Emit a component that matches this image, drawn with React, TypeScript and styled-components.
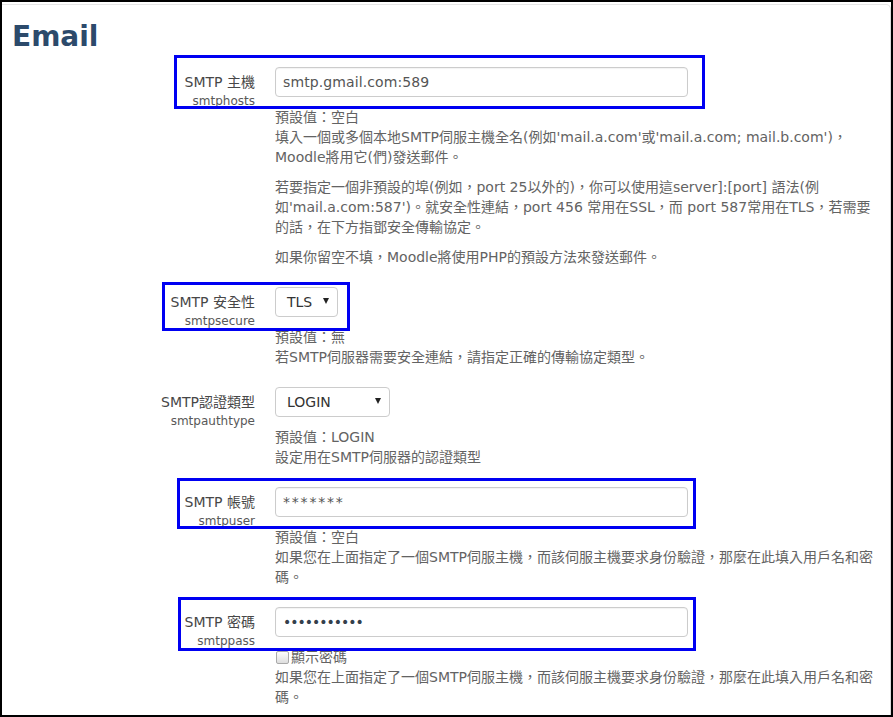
import styled, { createGlobalStyle } from 'styled-components';

const GlobalStyle = createGlobalStyle`
  html, body {
    margin: 0;
    padding: 0;
    background: #fff;
  }
  body {
    font-family: 'DejaVu Sans', 'Noto Sans CJK TC', sans-serif;
    font-size: 14px;
    color: #636363;
  }
`;

const Frame = styled.div`
  box-sizing: border-box;
  width: 893px;
  height: 717px;
  border: 2px solid #000;
  overflow: hidden;
  background: #fff;
`;

const Panel = styled.div`
  margin-top: 2px;
  min-height: 760px;
  border-top: 1px solid #e6e6e6;
  border-right: 1px solid #dcdcdc;
  border-top-right-radius: 5px;
`;

const Title = styled.h2`
  margin: 15px 0 0 10px;
  font-size: 28px;
  line-height: 34px;
  font-weight: bold;
  color: #2c4a6b;
`;

const Form = styled.div`
  margin-top: 13px;
  display: flex;
  flex-direction: column;
  gap: 20px;
`;

const Row = styled.div`
  position: relative;
  display: grid;
  grid-template-columns: 253px 1fr;
  column-gap: 20px;
`;

const LabelCol = styled.div`
  padding-top: 5px;
  text-align: right;
`;

const LabelMain = styled.div`
  font-size: 14px;
  line-height: 20px;
  color: #474747;
  white-space: nowrap;
`;

const LabelSub = styled.div`
  font-size: 12px;
  line-height: 18px;
  color: #585858;
`;

const ItemCol = styled.div`
  display: flex;
  flex-direction: column;
  align-items: flex-start;
`;

const TextInput = styled.input<{ $spacing: number }>`
  box-sizing: border-box;
  width: 413px;
  height: 30px;
  margin: 0;
  padding: 0 7px;
  border: 1px solid #ccc;
  border-radius: 4px;
  box-shadow: inset 0 1px 1px rgba(0, 0, 0, 0.05);
  font-family: 'DejaVu Sans', 'Noto Sans CJK TC', sans-serif;
  font-size: 14px;
  color: ${(p) => (p.type === 'password' ? '#34404c' : '#555')};
  letter-spacing: ${(p) => p.$spacing}px;
  background: #fff;
  outline: none;
`;

const SelectBox = styled.div<{ $width: number }>`
  box-sizing: border-box;
  display: flex;
  align-items: center;
  width: ${(p) => p.$width}px;
  height: 30px;
  padding: 0 8px 0 11px;
  border: 1px solid #ccc;
  border-radius: 4px;
  background: #fff;
  font-size: 14px;
  color: #333;
`;

const Caret = styled.span`
  margin-left: auto;
  margin-top: -3px;
  width: 0;
  height: 0;
  border-left: 3.5px solid transparent;
  border-right: 3.5px solid transparent;
  border-top: 6px solid #222;
`;

const CheckRow = styled.label`
  display: flex;
  align-items: center;
  height: 20px;
  line-height: 20px;
  margin-top: 10px;
`;

const CheckBox = styled.span`
  box-sizing: border-box;
  width: 13px;
  height: 13px;
  margin: 0 2px 0 1px;
  border: 1px solid #a9a9a9;
  border-radius: 2px;
  background: linear-gradient(#fdfdfd, #dedede);
`;

const Desc = styled.div<{ $tight?: boolean }>`
  margin-top: ${(p) => (p.$tight ? 0 : 10)}px;
  line-height: 20px;
  white-space: nowrap;
`;

const Para = styled.p`
  margin: 0 0 10px;
  &:last-child {
    margin-bottom: 0;
  }
`;

const Highlight = styled.div`
  position: absolute;
  box-sizing: border-box;
  border: 3px solid #0000f2;
  pointer-events: none;
`;

type Box = { left: number; top: number; width: number; height: number };

type Control =
  | { kind: 'text'; value: string; spacing: number }
  | { kind: 'password'; value: string; spacing: number }
  | { kind: 'select'; value: string; width: number };

type Setting = {
  label: string;
  name: string;
  control: Control;
  defaultText?: string;
  paragraphs: string[][];
  highlight?: Box;
};

const authHelp = [
  '如果您在上面指定了一個SMTP伺服主機，而該伺服主機要求身份驗證，那麼在此填入用戶名和密',
  '碼。',
];

const settings: Setting[] = [
  {
    label: 'SMTP 主機',
    name: 'smtphosts',
    control: { kind: 'text', value: 'smtp.gmail.com:589', spacing: 0.1 },
    defaultText: '預設值：空白',
    paragraphs: [
      [
        "填入一個或多個本地SMTP伺服主機全名(例如'mail.a.com'或'mail.a.com; mail.b.com')，",
        'Moodle將用它(們)發送郵件。',
      ],
      [
        '若要指定一個非預設的埠(例如，port 25以外的)，你可以使用這server]:[port] 語法(例',
        "如'mail.a.com:587')。就安全性連結，port 456 常用在SSL，而 port 587常用在TLS，若需要",
        '的話，在下方指鄧安全傳輸協定。',
      ],
      ['如果你留空不填，Moodle將使用PHP的預設方法來發送郵件。'],
    ],
    highlight: { left: 172, top: -12, width: 531, height: 54 },
  },
  {
    label: 'SMTP 安全性',
    name: 'smtpsecure',
    control: { kind: 'select', value: 'TLS', width: 63 },
    defaultText: '預設值：無',
    paragraphs: [['若SMTP伺服器需要安全連結，請指定正確的傳輸協定類型。']],
    highlight: { left: 160, top: -5, width: 188, height: 49 },
  },
  {
    label: 'SMTP認證類型',
    name: 'smtpauthtype',
    control: { kind: 'select', value: 'LOGIN', width: 115 },
    defaultText: '預設值：LOGIN',
    paragraphs: [['設定用在SMTP伺服器的認證類型']],
  },
  {
    label: 'SMTP 帳號',
    name: 'smtpuser',
    control: { kind: 'text', value: '*******', spacing: 1.8 },
    defaultText: '預設值：空白',
    paragraphs: [authHelp],
    highlight: { left: 175, top: -9, width: 519, height: 51 },
  },
  {
    label: 'SMTP 密碼',
    name: 'smtppass',
    control: { kind: 'password', value: 'abcdefghijk', spacing: -1 },
    paragraphs: [authHelp],
    highlight: { left: 176, top: -10, width: 518, height: 54 },
  },
];

function renderControl(control: Control) {
  if (control.kind === 'select') {
    return (
      <SelectBox $width={control.width}>
        {control.value}
        <Caret />
      </SelectBox>
    );
  }
  return (
    <TextInput
      type={control.kind}
      value={control.value}
      $spacing={control.spacing}
      readOnly
    />
  );
}

function SettingRow({ setting }: { setting: Setting }) {
  const { control, highlight } = setting;
  return (
    <Row>
      <LabelCol>
        <LabelMain>{setting.label}</LabelMain>
        <LabelSub>{setting.name}</LabelSub>
      </LabelCol>
      <ItemCol>
        {renderControl(control)}
        {control.kind === 'password' && (
          <CheckRow>
            <CheckBox />
            顯示密碼
          </CheckRow>
        )}
        <Desc $tight={control.kind === 'password'}>
          {setting.defaultText && <div>{setting.defaultText}</div>}
          {setting.paragraphs.map((lines, i) => (
            <Para key={i}>
              {lines.map((line, j) => (
                <span key={j}>
                  {line}
                  {j < lines.length - 1 && <br />}
                </span>
              ))}
            </Para>
          ))}
        </Desc>
      </ItemCol>
      {highlight && <Highlight style={highlight} />}
    </Row>
  );
}

export default function App() {
  return (
    <>
      <GlobalStyle />
      <Frame>
        <Panel>
          <Title>Email</Title>
          <Form>
            {settings.map((s) => (
              <SettingRow key={s.name} setting={s} />
            ))}
          </Form>
        </Panel>
      </Frame>
    </>
  );
}
